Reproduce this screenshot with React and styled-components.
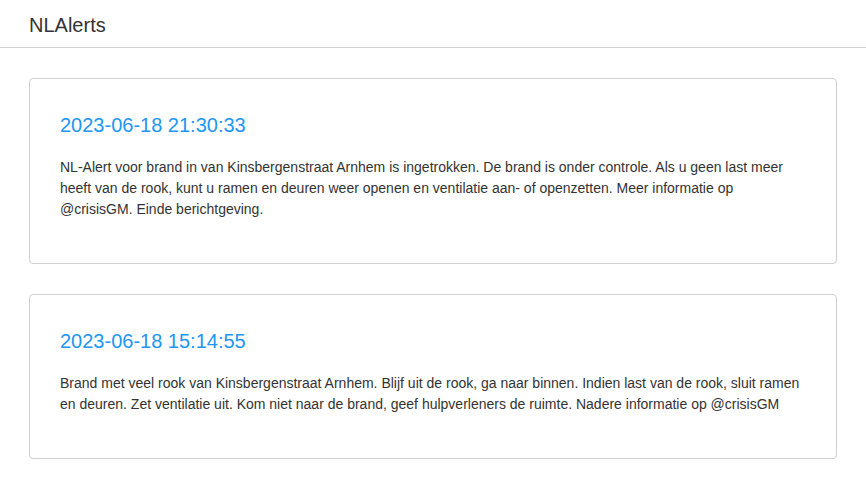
import styled, { createGlobalStyle } from "styled-components";

const GlobalStyle = createGlobalStyle`
    body {
        margin: 0;
        background: #fff;
        font-family: "Liberation Sans", Arial, sans-serif;
        color: #333;
    }
`;

const HeaderStyled = styled.header`
    height: 48px;
    box-sizing: border-box;
    border-bottom: 1px solid #d0d0d0;
    display: flex;
    align-items: center;
    padding: 3px 0 0 29px;
`;

const HeaderTitleStyled = styled.h1`
    margin: 0;
    font-size: 20px;
    font-weight: normal;
    color: #333;
`;

const AlertListStyled = styled.main`
    display: flex;
    flex-direction: column;
    gap: 30px;
    padding: 30px 29px 30px 29px;
`;

const AlertCardStyled = styled.div`
    border: 1px solid #d0d0d0;
    border-radius: 4px;
    padding: 34px 30px 43px 30px;
`;

const AlertDateStyled = styled.h3`
    margin: 0 0 20px;
    font-size: 20px;
    line-height: 24px;
    font-weight: normal;
    color: #2196f3;
`;

const AlertTextStyled = styled.p`
    margin: 0;
    font-size: 14px;
    line-height: 21px;
    color: #333;
`;

const alerts = [
    {
        date: "2023-06-18 21:30:33",
        text: "NL-Alert voor brand in van Kinsbergenstraat Arnhem is ingetrokken. De brand is onder controle. Als u geen last meer heeft van de rook, kunt u ramen en deuren weer openen en ventilatie aan- of openzetten. Meer informatie op @crisisGM. Einde berichtgeving."
    },
    {
        date: "2023-06-18 15:14:55",
        text: "Brand met veel rook van Kinsbergenstraat Arnhem. Blijf uit de rook, ga naar binnen. Indien last van de rook, sluit ramen en deuren. Zet ventilatie uit. Kom niet naar de brand, geef hulpverleners de ruimte. Nadere informatie op @crisisGM"
    }
];

const AlertCard = ({ alert }) => (
    <AlertCardStyled>
        <AlertDateStyled>{alert.date}</AlertDateStyled>
        <AlertTextStyled>{alert.text}</AlertTextStyled>
    </AlertCardStyled>
);

const App = () => (
    <>
        <GlobalStyle />
        <HeaderStyled>
            <HeaderTitleStyled>NLAlerts</HeaderTitleStyled>
        </HeaderStyled>
        <AlertListStyled>
            {alerts.map((alert) => (
                <AlertCard key={alert.date} alert={alert} />
            ))}
        </AlertListStyled>
    </>
);

export default App;
